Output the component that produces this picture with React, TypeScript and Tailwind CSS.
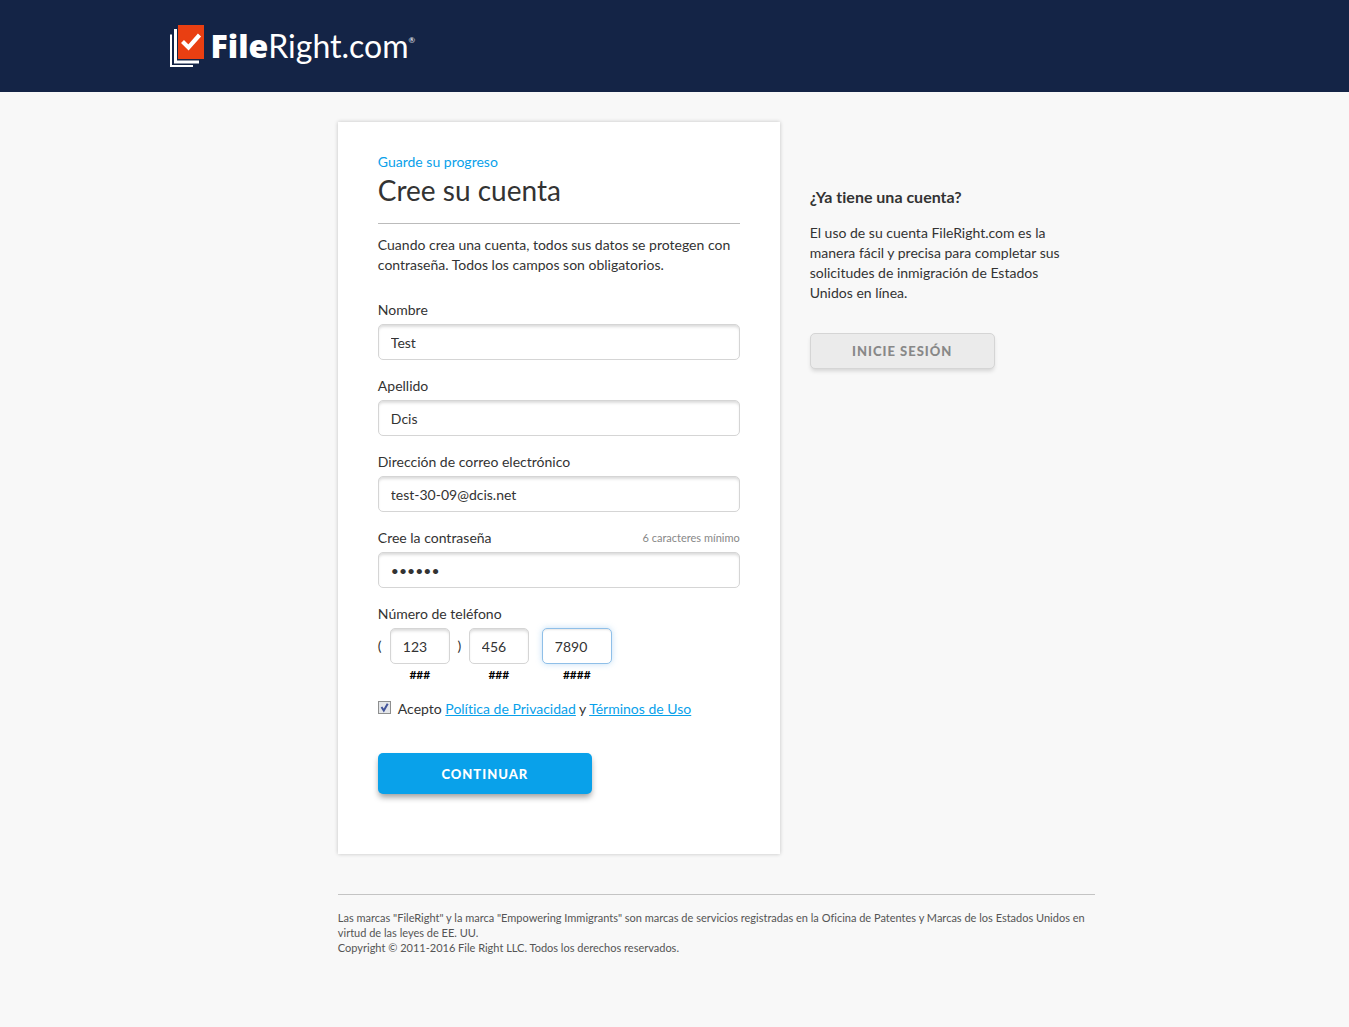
import React from "react";

const inputBase =
  "block h-9 rounded-[5px] border bg-white px-3 text-sm leading-5 text-[#333] outline-none";
const inputIdle = "border-[#d5d5d5] shadow-[inset_0_3px_3px_-1px_rgba(0,0,0,0.14)]";
const inputActive =
  "border-[#8fbfe8] shadow-[inset_0_2px_2px_-1px_rgba(0,0,0,0.1),0_0_6px_rgba(102,175,233,0.4)]";

function LogoMark() {
  return (
    <svg width="35" height="43" viewBox="0 0 35 43" aria-hidden="true">
      <path d="M0 9.500h2v30.500H23v2H0z" fill="#fff" />
      <path d="M4 4h3v31.500H29V38.500H4z" fill="#fff" />
      <rect x="8" y="0" width="26" height="34" fill="#e93f12" />
      <path d="M12.500 16.500l6 6L29.500 10" fill="none" stroke="#fff" strokeWidth="4.200" />
    </svg>
  );
}

function Logo() {
  return (
    <a href="#inicio" className="flex w-fit gap-[6px] text-white" aria-label="FileRight.com">
      <LogoMark />
      <span className="flex items-baseline text-[32px] leading-[41px]">
        <span className="font-['Noto_Sans',sans-serif] font-black">File</span>
        <span>Right.com</span>
        <span className="self-start pt-[9px] text-[8px] leading-3">®</span>
      </span>
    </a>
  );
}

type FieldProps = {
  id: string;
  label: string;
  type: string;
  value: string;
  hint?: string;
};

function Field({ id, label, type, value, hint }: FieldProps) {
  return (
    <div className="mb-4">
      <div className="mb-1 flex items-center justify-between">
        <label htmlFor={id} className="text-sm leading-5">
          {label}
        </label>
        {hint && <span className="text-[11px] leading-4 text-[#888]">{hint}</span>}
      </div>
      <input
        id={id}
        type={type}
        defaultValue={value}
        className={`w-full ${inputBase} ${inputIdle}`}
      />
    </div>
  );
}

type PhonePartProps = {
  id: string;
  mask: string;
  value: string;
  wide?: boolean;
  active?: boolean;
};

function PhonePart({ id, mask, value, wide, active }: PhonePartProps) {
  return (
    <div className="flex flex-col items-center">
      <input
        id={id}
        type="text"
        inputMode="numeric"
        defaultValue={value}
        className={`${wide ? "w-[70px]" : "w-[60px]"} ${inputBase} ${active ? inputActive : inputIdle}`}
      />
      <label htmlFor={id} className="mt-[3px] text-xs font-bold leading-4 text-black">
        {mask}
      </label>
    </div>
  );
}

function AccountForm() {
  return (
    <form
      className="col-span-7 bg-white px-10 pt-[30px] pb-[60px] shadow-[0_0_4px_rgba(0,0,0,0.22)]"
      onSubmit={(e) => e.preventDefault()}
    >
      <p className="text-sm leading-5 text-[#09a1ea]">Guarde su progreso</p>
      <h1 className="border-b border-[#bbb] pb-[15px] text-[28px] leading-9">Cree su cuenta</h1>
      <p className="mt-[11px] mb-[25px] text-sm leading-5">
        Cuando crea una cuenta, todos sus datos se protegen con contraseña. Todos los campos son
        obligatorios.
      </p>

      <Field id="nombre" label="Nombre" type="text" value="Test" />
      <Field id="apellido" label="Apellido" type="text" value="Dcis" />
      <Field
        id="correo"
        label="Dirección de correo electrónico"
        type="email"
        value="test-30-09@dcis.net"
      />
      <Field
        id="clave"
        label="Cree la contraseña"
        type="password"
        value="123456"
        hint="6 caracteres mínimo"
      />

      <fieldset>
        <legend className="mb-1 text-sm leading-5">Número de teléfono</legend>
        <div className="flex items-start text-sm leading-9">
          <span className="w-3">(</span>
          <PhonePart id="telefono-area" mask="###" value="123" />
          <span className="w-[19px] text-center">)</span>
          <PhonePart id="telefono-prefijo" mask="###" value="456" />
          <span className="w-[13px]" />
          <PhonePart id="telefono-numero" mask="####" value="7890" wide active />
        </div>
      </fieldset>

      <div className="mt-4 flex items-start text-sm leading-5">
        <span className="relative mt-[2px] mr-[7px] size-[13px]">
          <input
            id="acepto"
            type="checkbox"
            defaultChecked
            className="peer block size-[13px] appearance-none border border-[#8e8f8f] bg-[#e4e6e9]"
          />
          <svg
            viewBox="0 0 13 13"
            aria-hidden="true"
            className="pointer-events-none absolute inset-0 hidden size-[13px] peer-checked:block"
          >
            <path d="M3.500 6l2.300 3.500L9.700 2.800" fill="none" stroke="#42549a" strokeWidth="2" />
          </svg>
        </span>
        <p>
          <label htmlFor="acepto">Acepto</label>{" "}
          <a href="#privacidad" className="text-[#09a1ea] underline">
            Política de Privacidad
          </a>{" "}
          y{" "}
          <a href="#terminos" className="text-[#09a1ea] underline">
            Términos de Uso
          </a>
        </p>
      </div>

      <button
        type="submit"
        className="mt-[34px] block h-[41px] w-[214px] rounded-[5px] bg-[#09a1ea] pt-[2px] text-[13px] font-black tracking-[1px] text-white shadow-[0_4px_6px_-1px_rgba(0,0,0,0.4)]"
      >
        CONTINUAR
      </button>
    </form>
  );
}

function SignInAside() {
  return (
    <aside className="col-span-5 px-[30px] pt-[65px]">
      <h2 className="text-base font-bold leading-5">¿Ya tiene una cuenta?</h2>
      <p className="mt-4 text-sm leading-5">
        El uso de su cuenta FileRight.com es la manera fácil y precisa para completar sus
        solicitudes de inmigración de Estados Unidos en línea.
      </p>
      <button
        type="button"
        className="mt-[30px] h-9 w-[185px] rounded-[5px] border border-[#d5d5d5] bg-[#ebebeb] pt-[2px] text-[13px] font-black tracking-[1px] text-[#888] shadow-[0_3px_4px_-1px_rgba(0,0,0,0.15)]"
      >
        INICIE SESIÓN
      </button>
    </aside>
  );
}

export default function App() {
  return (
    <div className="min-h-screen bg-[#f8f8f8] font-['Lato',sans-serif] text-[#333] [font-variant-ligatures:none]">
      <header className="bg-[#142446] pt-[25px] pb-6">
        <div className="mx-auto max-w-[1010px]">
          <Logo />
        </div>
      </header>
      <div className="mx-auto grid max-w-[1010px] grid-cols-12 pt-[30px] pb-[70px]">
        <div className="col-span-9 col-start-3">
          <main className="grid grid-cols-12">
            <AccountForm />
            <SignInAside />
          </main>
          <footer className="mt-10 border-t border-[#c4c4c4] pt-[15px] text-[11px] leading-[15px] text-[#555]">
            <p>
              Las marcas "FileRight" y la marca "Empowering Immigrants" son marcas de servicios
              registradas en la Oficina de Patentes y Marcas de los Estados Unidos en virtud de las
              leyes de EE. UU.
            </p>
            <p>Copyright © 2011-2016 File Right LLC. Todos los derechos reservados.</p>
          </footer>
        </div>
      </div>
    </div>
  );
}
